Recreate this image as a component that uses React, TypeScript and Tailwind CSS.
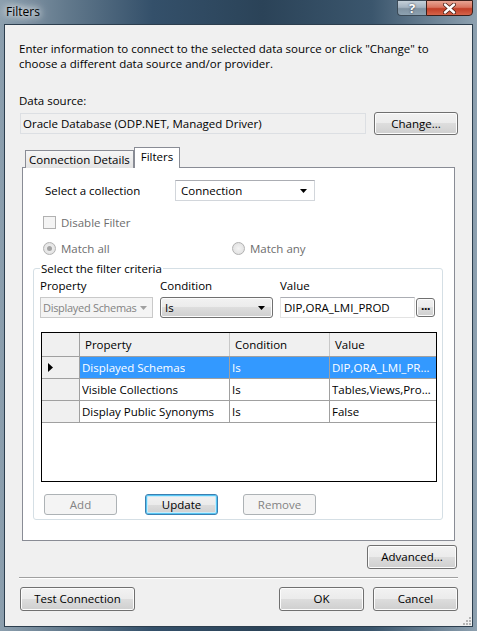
import clsx from "clsx";
import type { ReactNode } from "react";

const FONT = "font-['Open_Sans','Noto_Sans',sans-serif]";

const ROWS = [
  { property: "Displayed Schemas", condition: "Is", value: "DIP,ORA_LMI_PROD", selected: true },
  { property: "Visible Collections", condition: "Is", value: "Tables,Views,Procedures", selected: false },
  { property: "Display Public Synonyms", condition: "Is", value: "False", selected: false },
];

function Button({
  children,
  className,
  disabled,
  focused,
}: {
  children: ReactNode;
  className?: string;
  disabled?: boolean;
  focused?: boolean;
}) {
  return (
    <div
      className={clsx(
        "flex shrink-0 items-center justify-center rounded-[3px] border text-[11.5px] leading-none",
        disabled
          ? "border-[#adb2b5] bg-[#f4f4f4] text-[#838383]"
          : focused
            ? "border-[#3c7fb1] bg-[linear-gradient(#f2f2f2_0%,#ebebeb_50%,#dddddd_50%,#cfcfcf_100%)] text-black shadow-[inset_0_0_0_1px_#56c6f3,inset_0_0_0_2px_#c9ebfa]"
            : "border-[#707070] bg-[linear-gradient(#f2f2f2_0%,#ebebeb_50%,#dddddd_50%,#cfcfcf_100%)] text-black shadow-[inset_0_0_0_1px_#fcfcfc]",
        className,
      )}
    >
      {children}
    </div>
  );
}

function Arrow({ color = "#000" }: { color?: string }) {
  return (
    <svg width="7" height="4" viewBox="0 0 7 4" className="shrink-0">
      <path d="M0 0h7L3.5 4z" fill={color} />
    </svg>
  );
}

function Radio({ checked }: { checked?: boolean }) {
  return (
    <span className="flex h-[13px] w-[13px] shrink-0 items-center justify-center rounded-full border border-[#b1b1b1] bg-[radial-gradient(circle,#f4f4f4,#dcdcdc)]">
      {checked && <span className="h-[5px] w-[5px] rounded-full bg-[#a3a3a3]" />}
    </span>
  );
}

function FilterGrid() {
  return (
    <div className="ml-[1px] mt-[14px] h-[150px] w-[396px] border border-black bg-white">
      <div className="grid h-[24px] grid-cols-[38px_150px_100px_106px] border-b border-[#a0a0a0] bg-[#f0f0f0]">
        <div className="border-r border-[#a0a0a0]" />
        <div className="flex items-center border-r border-[#c8c8c8] pl-[5px]">Property</div>
        <div className="flex items-center border-r border-[#c8c8c8] pl-[5px]">Condition</div>
        <div className="flex items-center pl-[5px]">Value</div>
      </div>
      {ROWS.map((r) => (
        <div key={r.property} className="grid h-[22px] grid-cols-[38px_150px_100px_106px]">
          <div className="flex items-center border-b border-r border-[#a0a0a0] bg-[#f0f0f0] pl-[6px]">
            {r.selected && (
              <svg width="5" height="9" viewBox="0 0 5 9">
                <path d="M0 0l5 4.5L0 9z" fill="#000" />
              </svg>
            )}
          </div>
          {[r.property, r.condition, r.value].map((v, i) => (
            <div
              key={i}
              className={clsx(
                "flex min-w-0 items-center border-b border-[#a0a0a0] pl-[2px] pr-[2px]",
                i < 2 && "border-r",
                r.selected ? "bg-[#3399ff] text-white" : "text-black",
              )}
            >
              <span className="truncate">{v}</span>
            </div>
          ))}
        </div>
      ))}
    </div>
  );
}

function FiltersTab() {
  return (
    <div className="h-[374px] w-[433px] border border-[#898c95] bg-white">
      <div className="flex items-center pl-[22px] pt-[12px]">
        <span className="w-[130px]">Select a collection</span>
        <div className="flex h-[21px] w-[140px] items-center justify-between border border-[#d2d6db] border-t-[#abadb3] bg-white pl-[5px] pr-[7px]">
          <span>Connection</span>
          <Arrow />
        </div>
      </div>

      <div className="mt-[14px] flex items-center gap-[5px] pl-[20px] text-[#6d6d6d]">
        <span className="h-[13px] w-[13px] border border-[#b1b1b1] bg-[#f4f4f4]" />
        <span>Disable Filter</span>
      </div>

      <div className="mt-[11px] flex items-center pl-[20px] text-[#6d6d6d]">
        <div className="flex w-[189px] items-center gap-[5px]">
          <Radio checked />
          <span>Match all</span>
        </div>
        <div className="flex items-center gap-[5px]">
          <Radio />
          <span>Match any</span>
        </div>
      </div>

      <fieldset className="ml-[10px] mt-[5px] w-[410px] rounded-[3px] border border-[#d5dfe5] pb-[4px] pl-[6px]">
        <legend className="px-[1px] leading-[15px]">Select the filter criteria</legend>
        <div className="mt-[2px] flex">
          <span className="w-[120px]">Property</span>
          <span className="w-[120px]">Condition</span>
          <span>Value</span>
        </div>
        <div className="mt-[4px] flex items-center">
          <div className="flex h-[21px] w-[113px] items-center justify-between border border-[#c9c9c9] bg-[#f4f4f4] pl-[2px] pr-[5px] text-[#838383]">
            <span className="whitespace-nowrap text-[11px] tracking-[-0.3px]">Displayed Schemas</span>
            <Arrow color="#a0a0a0" />
          </div>
          <div className="ml-[7px] flex h-[21px] w-[113px] items-center justify-between rounded-[3px] border border-[#707070] bg-[linear-gradient(#f2f2f2_0%,#ebebeb_50%,#dddddd_50%,#cfcfcf_100%)] pl-[4px] pr-[7px] shadow-[inset_0_0_0_1px_#fcfcfc]">
            <span>Is</span>
            <Arrow />
          </div>
          <div className="ml-[7px] flex h-[21px] w-[135px] items-center border border-[#e3e3e3] border-t-[#abadb3] bg-white pl-[3px]">
            DIP,ORA_LMI_PROD
          </div>
          <Button className="ml-[1px] h-[19px] w-[19px] pb-[3px] text-[12px] font-bold tracking-[-0.5px]">...</Button>
        </div>

        <FilterGrid />

        <div className="mt-[12px] flex">
          <Button disabled className="ml-[4px] h-[21px] w-[73px]">
            Add
          </Button>
          <Button focused className="ml-[28px] h-[21px] w-[73px]">
            Update
          </Button>
          <Button disabled className="ml-[25px] h-[21px] w-[73px]">
            Remove
          </Button>
        </div>
      </fieldset>
    </div>
  );
}

export default function App() {
  return (
    <div
      className={clsx(
        "relative h-[631px] w-[477px] overflow-hidden bg-[linear-gradient(90deg,#8c9fae_0%,#62798c_14%,#34506a_32%,#2b4358_55%,#3b566d_78%,#8ea1b0_100%)] text-[11.5px] leading-[15px] text-black",
        FONT,
      )}
    >
      <div className="flex h-[24px] items-start justify-between pl-[6px]">
        <span className="mt-[4px] text-[12px] [text-shadow:0_0_6px_#fff,0_0_10px_#fff,0_0_14px_#fff]">Filters</span>
        <div className="mr-[4px] flex">
          <div className="flex h-[16px] w-[29px] items-center justify-center rounded-bl-[4px] border border-r-0 border-[#3b4a57] bg-[linear-gradient(#c5d0d9_0%,#a3b3c0_45%,#7f92a1_55%,#8ea2b1_100%)] text-[13px] font-bold leading-none text-white [text-shadow:0_0_2px_#223]">
            ?
          </div>
          <div className="flex h-[16px] w-[47px] items-center justify-center rounded-br-[4px] border border-[#3b1f1a] bg-[linear-gradient(#e8a493_0%,#d9745f_45%,#c23e26_55%,#d6644a_100%)]">
            <svg width="13" height="11" viewBox="0 0 13 11">
              <path d="M2 1.5l9 8M11 1.5l-9 8" stroke="#4a1d14" strokeWidth="4" strokeLinecap="round" />
              <path d="M2 1.5l9 8M11 1.5l-9 8" stroke="#fff" strokeWidth="2.4" strokeLinecap="round" />
            </svg>
          </div>
        </div>
      </div>

      <div className="relative mx-[4px] flex h-[603px] flex-col border border-[#2c3e4e] bg-[#f0f0f0] px-[14px] pt-[16px]">
        <p>
          Enter information to connect to the selected data source or click "Change" to
          <br />
          choose a different data source and/or provider.
        </p>

        <div className="mt-[22px]">Data source:</div>
        <div className="mt-[4px] flex items-center">
          <div className="ml-[1px] flex h-[21px] w-[346px] items-center border border-[#dcdfe3] bg-[#f0f0f0] pl-[2px]">
            Oracle Database (ODP.NET, Managed Driver)
          </div>
          <Button className="ml-[8px] h-[23px] w-[84px]">Change...</Button>
        </div>

        <div className="ml-[3px] mt-[12px]">
          <div className="relative z-10 -mb-px flex items-end pl-[3px]">
            <div className="flex h-[18px] items-center border border-b-0 border-[#898c95] bg-[linear-gradient(#f6f6f6,#e3e3e3)] px-[3px]">
              Connection Details
            </div>
            <div className="flex h-[21px] items-center border border-b-0 border-[#898c95] bg-white px-[6px] pb-[3px]">
              Filters
            </div>
          </div>
          <FiltersTab />
        </div>

        <div className="mr-[1px] mt-[4px] flex justify-end">
          <Button className="h-[24px] w-[90px]">Advanced...</Button>
        </div>

        <div className="mt-[8px] h-px bg-[#a0a0a0] shadow-[0_1px_0_#fff]" />

        <div className="mt-[9px] flex">
          <Button className="ml-[1px] h-[24px] w-[115px]">Test Connection</Button>
          <Button className="ml-auto h-[24px] w-[85px]">OK</Button>
          <Button className="ml-[9px] h-[24px] w-[85px]">Cancel</Button>
        </div>

        <svg width="8" height="8" viewBox="0 0 8 8" className="absolute bottom-[1px] right-[1px]">
          {[
            [6, 0],
            [6, 3],
            [3, 3],
            [6, 6],
            [3, 6],
            [0, 6],
          ].map(([x, y]) => (
            <rect key={`${x}-${y}`} x={x} y={y} width="2" height="2" fill="#b4b4b4" />
          ))}
        </svg>
      </div>
    </div>
  );
}
